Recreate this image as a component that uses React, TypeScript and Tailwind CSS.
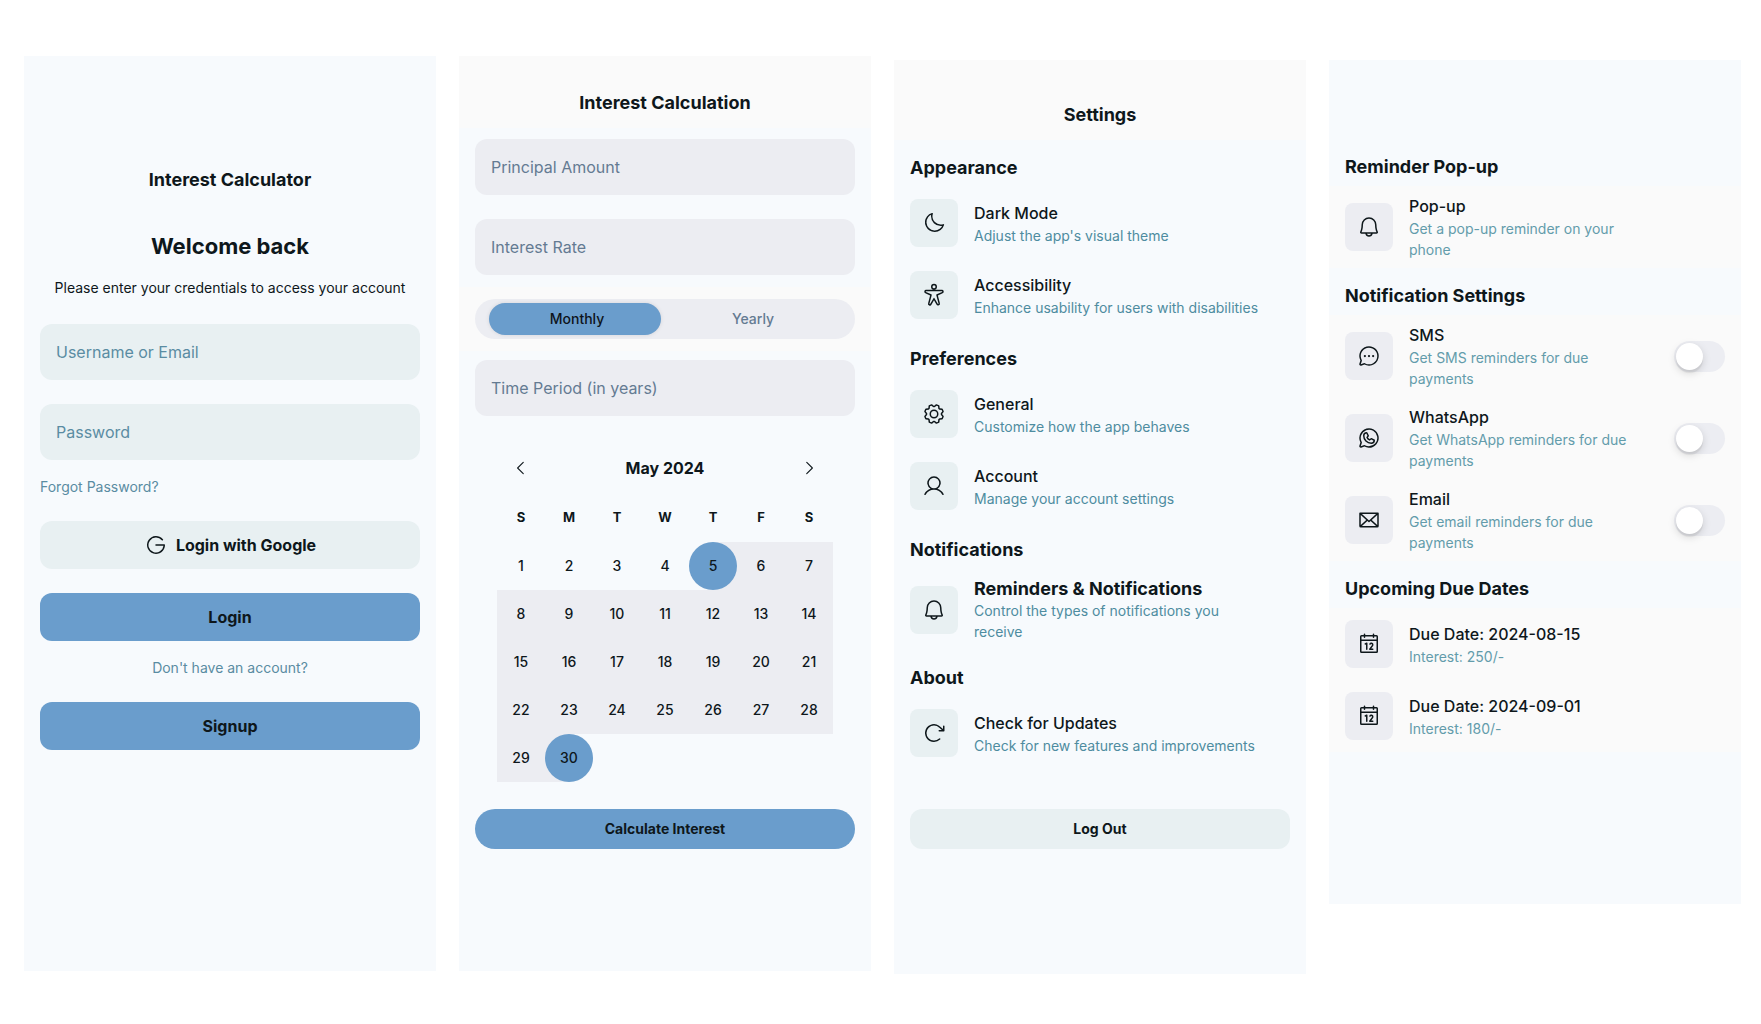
import { ReactNode, useState } from "react";
import {
  PiArrowClockwise,
  PiBell,
  PiCalendar,
  PiCaretLeft,
  PiCaretRight,
  PiChatCircleDots,
  PiEnvelope,
  PiGear,
  PiGoogleLogo,
  PiMoon,
  PiPersonArmsSpread,
  PiUser,
  PiWhatsappLogo,
} from "react-icons/pi";

type Tone = "mint" | "slate";

function Screen({ label, className, children }: { label: string; className: string; children: ReactNode }) {
  return (
    <section aria-label={label} className={`flex flex-col bg-[#f7fafd] ${className}`}>
      {children}
    </section>
  );
}

function TextField({ label, type = "text", tone }: { label: string; type?: string; tone: Tone }) {
  const colors =
    tone === "mint"
      ? "bg-[#e8f0f2] placeholder:text-[#5a8ca2]"
      : "bg-[#ecedf2] placeholder:text-[#647b92]";
  return (
    <input
      type={type}
      aria-label={label}
      placeholder={label}
      className={`h-14 w-full rounded-xl px-4 text-base outline-none ${colors}`}
    />
  );
}

function SectionTitle({ children }: { children: ReactNode }) {
  return <h2 className="px-4 pt-4 pb-2 text-lg leading-[23px] font-bold">{children}</h2>;
}

type ItemProps = {
  icon: ReactNode;
  title: string;
  note: string;
  tone: Tone;
  strong?: boolean;
  action?: ReactNode;
};

function Item({ icon, title, note, tone, strong, action }: ItemProps) {
  return (
    <li className={`flex min-h-18 items-center gap-4 px-4 py-2 ${tone === "slate" ? "bg-[#fafafa]" : ""}`}>
      <span
        className={`flex size-12 shrink-0 items-center justify-center rounded-lg text-2xl ${
          tone === "slate" ? "bg-[#ecedf2]" : "bg-[#e8f0f2]"
        }`}
      >
        {icon}
      </span>
      <div className={`flex-1 ${tone === "slate" ? "max-w-[240px]" : "max-w-[288px]"}`}>
        <h3 className={strong ? "text-lg leading-[23px] font-bold" : "text-base font-medium"}>{title}</h3>
        <p className={`text-sm leading-[21px] ${tone === "slate" ? "text-[#639cab]" : "text-[#4e8ca0]"}`}>{note}</p>
      </div>
      {action && <div className="ml-auto flex">{action}</div>}
    </li>
  );
}

function Toggle({ label }: { label: string }) {
  return (
    <label className="flex h-[31px] w-[51px] cursor-pointer items-center rounded-full bg-[#ecedf2] p-0.5 has-checked:justify-end has-checked:bg-[#6a9dcc]">
      <input type="checkbox" role="switch" aria-label={label} className="sr-only" />
      <span className="size-[27px] rounded-full bg-white shadow-[0_3px_8px_rgba(0,0,0,0.15),0_3px_1px_rgba(0,0,0,0.06)]" />
    </label>
  );
}

function LoginScreen() {
  return (
    <Screen label="Login" className="min-h-[915px] px-4 pt-28">
      <h1 className="text-center text-lg leading-6 font-bold">Interest Calculator</h1>
      <h2 className="mt-10 text-center text-[22px] leading-7 font-bold">Welcome back</h2>
      <p className="mt-4 text-center text-sm leading-6">Please enter your credentials to access your account</p>
      <form className="mt-6 flex flex-col" onSubmit={(e) => e.preventDefault()}>
        <div className="flex flex-col gap-6">
          <TextField label="Username or Email" tone="mint" />
          <TextField label="Password" type="password" tone="mint" />
        </div>
        <a href="#forgot" className="mt-4 self-start text-sm leading-[21px] text-[#5a8ca2]">
          Forgot Password?
        </a>
        <button type="button" className="mt-6 flex h-12 items-center justify-center gap-2 rounded-xl bg-[#e8f0f2] font-bold">
          <PiGoogleLogo className="size-6" />
          Login with Google
        </button>
        <button type="submit" className="mt-6 h-12 rounded-xl bg-[#6a9dcc] font-bold">
          Login
        </button>
        <p className="mt-4 text-center text-sm leading-[21px] text-[#5a8ca2]">Don't have an account?</p>
        <button type="button" className="mt-6 h-12 rounded-xl bg-[#6a9dcc] font-bold">
          Signup
        </button>
      </form>
    </Screen>
  );
}

const RANGE_START = 5;
const RANGE_END = 30;
const WEEKS = [0, 1, 2, 3, 4].map((w) => [1, 2, 3, 4, 5, 6, 7].map((d) => w * 7 + d));

function Day({ day }: { day: number }) {
  if (day > RANGE_END) return <td />;
  const isEdge = day === RANGE_START || day === RANGE_END;
  const shape = day === RANGE_START ? "rounded-l-full" : day === RANGE_END ? "rounded-r-full" : "";
  return (
    <td className={`h-12 p-0 ${day >= RANGE_START ? "bg-[#ecedf2]" : ""} ${shape}`}>
      <button type="button" className={`size-12 rounded-full text-sm font-medium ${isEdge ? "bg-[#6a9dcc]" : ""}`}>
        {day}
      </button>
    </td>
  );
}

function Calendar() {
  return (
    <div className="mx-auto w-[336px] pt-[26px]">
      <div className="flex h-[52px] items-center justify-between">
        <button type="button" aria-label="Previous month" className="flex size-12 items-center justify-center">
          <PiCaretLeft className="size-[18px]" />
        </button>
        <h2 className="text-base font-bold">May 2024</h2>
        <button type="button" aria-label="Next month" className="flex size-12 items-center justify-center">
          <PiCaretRight className="size-[18px]" />
        </button>
      </div>
      <table className="w-full table-fixed border-separate border-spacing-0 text-center">
        <thead>
          <tr>
            {["S", "M", "T", "W", "T", "F", "S"].map((d, i) => (
              <th key={i} scope="col" className="h-12 p-0 text-[13px] font-bold">
                {d}
              </th>
            ))}
          </tr>
        </thead>
        <tbody>
          {WEEKS.map((week) => (
            <tr key={week[0]}>
              {week.map((day) => (
                <Day key={day} day={day} />
              ))}
            </tr>
          ))}
        </tbody>
      </table>
    </div>
  );
}

function CalculationScreen() {
  const [period, setPeriod] = useState("Monthly");
  return (
    <Screen label="Interest Calculation" className="min-h-[915px]">
      <header className="bg-[#fafafa] pt-[35px] pb-[13px]">
        <h1 className="text-center text-lg leading-6 font-bold">Interest Calculation</h1>
      </header>
      <div className="flex flex-col gap-6 px-4 pt-[11px] pb-3">
        <TextField label="Principal Amount" tone="slate" />
        <TextField label="Interest Rate" tone="slate" />
      </div>
      <div className="bg-[#fafafa] px-4 py-3">
        <div role="radiogroup" aria-label="Period" className="flex h-10 rounded-full bg-[#ecedf2] px-3.5 py-1">
          {["Monthly", "Yearly"].map((p) => (
            <label
              key={p}
              className="mr-1 flex flex-1 cursor-pointer items-center justify-center rounded-full pl-1 text-sm font-medium text-[#647b92] has-checked:bg-[#6a9dcc] has-checked:text-[#0e141b] has-checked:shadow-[0_0_4px_rgba(0,0,0,0.1)]"
            >
              <input
                type="radio"
                name="period"
                value={p}
                checked={period === p}
                onChange={() => setPeriod(p)}
                className="sr-only"
              />
              {p}
            </label>
          ))}
        </div>
      </div>
      <div className="px-4 pt-[9px]">
        <TextField label="Time Period (in years)" tone="slate" />
      </div>
      <Calendar />
      <div className="px-4 pt-[27px]">
        <button type="button" className="h-10 w-full rounded-full bg-[#6a9dcc] text-sm font-bold">
          Calculate Interest
        </button>
      </div>
    </Screen>
  );
}

function SettingsScreen() {
  return (
    <Screen label="Settings" className="mt-1 min-h-[914px]">
      <header className="bg-[#fafafa] pt-[43px] pb-[13px]">
        <h1 className="text-center text-lg leading-6 font-bold">Settings</h1>
      </header>
      <SectionTitle>Appearance</SectionTitle>
      <ul>
        <Item tone="mint" icon={<PiMoon />} title="Dark Mode" note="Adjust the app's visual theme" />
        <Item
          tone="mint"
          icon={<PiPersonArmsSpread />}
          title="Accessibility"
          note="Enhance usability for users with disabilities"
        />
      </ul>
      <SectionTitle>Preferences</SectionTitle>
      <ul>
        <Item tone="mint" icon={<PiGear />} title="General" note="Customize how the app behaves" />
        <Item tone="mint" icon={<PiUser />} title="Account" note="Manage your account settings" />
      </ul>
      <SectionTitle>Notifications</SectionTitle>
      <ul>
        <Item
          tone="mint"
          strong
          icon={<PiBell />}
          title="Reminders & Notifications"
          note="Control the types of notifications you receive"
        />
      </ul>
      <SectionTitle>About</SectionTitle>
      <ul>
        <Item
          tone="mint"
          icon={<PiArrowClockwise />}
          title="Check for Updates"
          note="Check for new features and improvements"
        />
      </ul>
      <div className="px-4 pt-10">
        <button type="button" className="h-10 w-full rounded-xl bg-[#e8f0f2] text-sm font-bold">
          Log Out
        </button>
      </div>
    </Screen>
  );
}

function RemindersScreen() {
  return (
    <Screen label="Reminders" className="mt-1 min-h-[844px] pt-[79px]">
      <SectionTitle>Reminder Pop-up</SectionTitle>
      <ul>
        <Item tone="slate" icon={<PiBell />} title="Pop-up" note="Get a pop-up reminder on your phone" />
      </ul>
      <SectionTitle>Notification Settings</SectionTitle>
      <ul>
        <Item
          tone="slate"
          icon={<PiChatCircleDots />}
          title="SMS"
          note="Get SMS reminders for due payments"
          action={<Toggle label="SMS" />}
        />
        <Item
          tone="slate"
          icon={<PiWhatsappLogo />}
          title="WhatsApp"
          note="Get WhatsApp reminders for due payments"
          action={<Toggle label="WhatsApp" />}
        />
        <Item
          tone="slate"
          icon={<PiEnvelope />}
          title="Email"
          note="Get email reminders for due payments"
          action={<Toggle label="Email" />}
        />
      </ul>
      <SectionTitle>Upcoming Due Dates</SectionTitle>
      <ul>
        <Item tone="slate" icon={<PiCalendar />} title="Due Date: 2024-08-15" note="Interest: 250/-" />
        <Item tone="slate" icon={<PiCalendar />} title="Due Date: 2024-09-01" note="Interest: 180/-" />
      </ul>
    </Screen>
  );
}

export default function App() {
  return (
    <main className="grid min-h-screen grid-cols-4 items-start gap-[23px] bg-white pt-14 pr-5 pl-6 font-['Inter',sans-serif] text-[#0e171b]">
      <LoginScreen />
      <CalculationScreen />
      <SettingsScreen />
      <RemindersScreen />
    </main>
  );
}
